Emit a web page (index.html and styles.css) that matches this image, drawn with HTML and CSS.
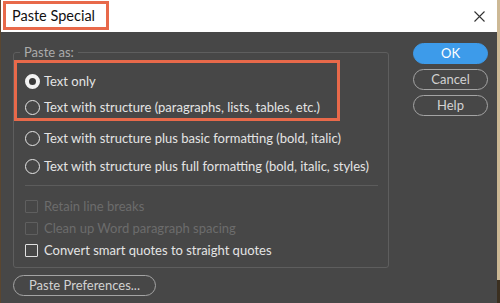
FILE: index.html
```html
<!DOCTYPE html>
<html lang="en">
  <head>
    <meta charset="UTF-8" />
    <title>Paste Special</title>
    <link rel="stylesheet" href="styles.css">
  </head>
  <body>
    <div class="dialog">
      <div class="title-bar">
        <span class="title mark">Paste Special</span>
        <span class="close" aria-label="Close">
          <svg width="11" height="11" viewBox="0 0 11 11">
            <path d="M0.5 0.5 L10.5 10.5 M10.5 0.5 L0.5 10.5" stroke="#333" stroke-width="1.1" fill="none" />
          </svg>
        </span>
      </div>

      <div class="body">
        <div class="main">
          <fieldset class="group">
            <legend>Paste as:</legend>

            <div class="mark highlight">
              <label class="option">
                <span class="radio checked"></span>
                Text only
              </label>
              <label class="option">
                <span class="radio"></span>
                Text with structure (paragraphs, lists, tables, etc.)
              </label>
            </div>

            <label class="option spaced">
              <span class="radio"></span>
              Text with structure plus basic formatting (bold, italic)
            </label>
            <label class="option spaced">
              <span class="radio"></span>
              Text with structure plus full formatting (bold, italic, styles)
            </label>

            <div class="separator"></div>

            <label class="option check disabled">
              <span class="box"></span>
              Retain line breaks
            </label>
            <label class="option check disabled">
              <span class="box"></span>
              Clean up Word paragraph spacing
            </label>
            <label class="option check">
              <span class="box"></span>
              Convert smart quotes to straight quotes
            </label>
          </fieldset>

          <button class="pill prefs">Paste Preferences...</button>
        </div>

        <div class="actions">
          <button class="pill primary">OK</button>
          <button class="pill">Cancel</button>
          <button class="pill">Help</button>
        </div>
      </div>
    </div>
  </body>
</html>
```

FILE: styles.css
```css
* {
  box-sizing: border-box;
}
body {
  margin: 0;
  width: 500px;
  height: 303px;
  overflow: hidden;
  background: linear-gradient(#cdb995 0, #cdb995 280px, #3b2f20 280px);
  font-family: Lato, "Noto Sans", sans-serif;
}
.dialog {
  width: 497px;
  height: 303px;
  background-color: #474747;
  border-left: 1px solid #5a4630;
  display: flex;
  flex-direction: column;
}
.title-bar {
  height: 32px;
  background-color: #fff;
  display: flex;
  align-items: flex-start;
  justify-content: space-between;
}
.mark {
  border: 3px solid #e8694a;
}
.title {
  margin: 1px 0 0 2px;
  width: 106px;
  height: 29px;
  padding: 3px 0 0 6px;
  font-size: 14.5px;
  color: #111;
}
.close {
  margin: 11px 12px 0 0;
  display: flex;
}
.body {
  flex: 1;
  display: flex;
  gap: 24px;
  padding: 12px 0 0 12px;
}
.main {
  display: flex;
  flex-direction: column;
}
.group {
  margin: 0;
  width: 376px;
  height: 224px;
  padding: 0;
  border: 1px solid #5e5e5e;
  border-radius: 3px;
}
legend {
  margin-left: 6px;
  padding: 0 4px;
  font-size: 13px;
  line-height: 16px;
  color: #ababab;
}
.highlight {
  width: 326px;
  height: 61px;
  padding: 9px 0 0 8px;
  display: flex;
  flex-direction: column;
  gap: 8px;
}
.option {
  display: flex;
  align-items: center;
  height: 18px;
  gap: 4px;
  font-size: 13px;
  color: #e4e4e4;
  white-space: nowrap;
}
.group > .option {
  padding-left: 11px;
}
.spaced {
  margin-top: 8px;
}
.spaced + .spaced {
  margin-top: 10px;
}
.radio {
  width: 15px;
  height: 15px;
  border-radius: 50%;
  border: 1.5px solid #e6e6e6;
  flex: none;
}
.radio.checked {
  border: 4.5px solid #f2f2f2;
  background-color: #3a3a3a;
}
.separator {
  margin: 10px 10px 11px 11px;
  height: 1px;
  background-color: #5c5c5c;
}
.check {
  gap: 6px;
  margin-bottom: 4px;
}
.box {
  width: 13px;
  height: 13px;
  border: 1.5px solid #e0e0e0;
  border-radius: 1px;
  flex: none;
}
.disabled {
  color: #6c6c6c;
}
.disabled .box {
  border-color: #5f5f5f;
}
.pill {
  height: 21px;
  border-radius: 11px;
  border: 1.5px solid #a4a4a4;
  background-color: transparent;
  color: #d2d2d2;
  font-family: inherit;
  font-size: 13px;
  padding: 0;
  line-height: 17px;
}
.prefs {
  margin-top: 7px;
  width: 143px;
}
.actions {
  display: flex;
  flex-direction: column;
  gap: 5px;
  margin-top: -1px;
}
.actions .pill {
  width: 75px;
}
.primary {
  background-color: #3d9bea;
  border-color: #3d9bea;
  color: #fff;
}
```
